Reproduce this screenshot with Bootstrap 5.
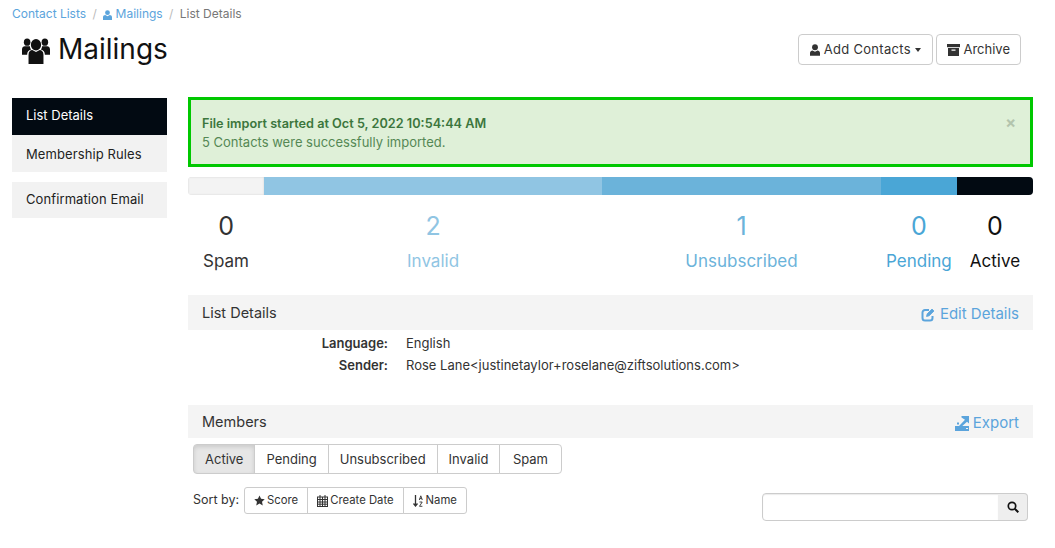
<!DOCTYPE html>
<html lang="en">
<head>
    <meta charset="UTF-8">
    <meta name="viewport" content="width=device-width, initial-scale=1.0">
    <title>Mailings</title>
    <link href="https://cdn.jsdelivr.net/npm/bootstrap@5.3.0/dist/css/bootstrap.min.css" rel="stylesheet">
    <style>
        body {
            font-family: Inter, "Liberation Sans", sans-serif;
            font-size: 13px;
            color: #333;
            background: #fff;
            overflow: hidden;
        }
        a { text-decoration: none; color: #5ba4dc; }
        .page-wrap { padding: 0 22px 0 12px; }
        .crumbs { font-size: 12px; height: 27px; margin: 0; padding-top: 5px; --bs-breadcrumb-item-padding-x: .4rem; }
        .crumbs .breadcrumb-item.active { color: #777; }
        .crumbs .breadcrumb-item + .breadcrumb-item::before { color: #bbb; }
        .head-row { height: 45px; padding: 0 12px 0 10px; margin-bottom: 26px; }
        .page-title { font-size: 28px; font-weight: 400; margin: 0; color: #111; display: flex; align-items: center; gap: 8px; }
        .head-btn { font-size: 13px; color: #333; border: 1px solid #ccc; background: #fff; padding: 5px 10px; line-height: 19px; border-radius: 4px; }
        .head-btn.wide-text { letter-spacing: .3px; padding: 5px 11px; }
        .head-gap { gap: 3px; }
        .side-col { width: 155px; flex: none; margin-right: 21px; }
        .side-link { display: block; background: #f2f2f2; color: #222; font-size: 13px; padding: 8px 14px; line-height: 18px; letter-spacing: .1px; }
        .side-link.on { background: #020a12; color: #fff; height: 37px; letter-spacing: 0; }
        .side-link.gap-top { margin-top: 10px; height: 36px; }
        .side-link.mid { height: 37px; padding-top: 10px; }
        .main-col { width: 845px; flex: none; margin-top: -1px; }
        .import-alert { background: #dff0d8; color: #3c763d; border: 3px solid #00c800; border-radius: 0; padding: 14px 11px 12px; height: 70px; margin-bottom: 10px; line-height: 18px; font-size: 13px; position: relative; }
        .import-alert strong { font-size: 12.7px; }
        .import-alert .note { opacity: .85; }
        .close-x { position: absolute; right: 14px; top: 13px; color: #b3c4ad; font-weight: 700; font-size: 16px; line-height: 18px; }
        .bar { height: 18px; border-radius: 4px; background: #f5f5f5; box-shadow: inset 0 1px 2px rgba(0,0,0,.1); }
        .seg-spam { background: #f3f3f3; box-shadow: inset 0 0 2px rgba(0,0,0,.15); }
        .seg-invalid { background: #90c5e3; }
        .seg-unsub { background: #6bb3da; }
        .seg-pending { background: #4aa6d6; }
        .seg-active { background: #020a12; }
        .stat-cell { text-align: center; white-space: nowrap; }
        .stat-num { font-size: 25px; line-height: 30px; margin-top: 16px; }
        .stat-name { font-size: 17px; line-height: 24px; margin-top: 8px; }
        .tone-dark { color: #333; }
        .tone-black { color: #111; }
        .tone-invalid { color: #90c5e3; }
        .tone-unsub { color: #6bb3da; }
        .tone-pending { color: #4aa6d6; }
        .band { background: #f4f4f4; height: 35px; padding: 0 14px; margin-top: 22px; font-size: 14.5px; }
        .band-link { font-size: 15px; display: flex; align-items: center; gap: 4px; padding-top: 3px; }
        .info-row { line-height: 22px; display: flex; }
        .info-key { width: 200px; text-align: right; font-weight: 600; margin-right: 18px; }
        .info-block { padding-top: 2px; height: 75px; }
        .tab-group { margin: 6px 0 0 5px; }
        .tab-btn { font-size: 13px; padding: 4px 11px; line-height: 19px; border: 1px solid #ccc; color: #333; background: #fff; border-radius: 4px; height: 30px; }
        .tab-btn:last-child { padding: 4px 12.500px; }
        .tab-btn.on { background: #e6e6e6; box-shadow: inset 0 2px 4px rgba(0,0,0,.12); }
        .sort-row { margin: 13px 0 0 5px; }
        .sort-btn { font-size: 11.3px; padding: 3px 9px; line-height: 19px; border: 1px solid #ccc; color: #333; background: #fff; display: inline-flex; align-items: center; gap: 2px; border-radius: 3px; }
        .sort-label { margin-right: 5px; font-size: 12.5px; }
        .search-box { width: 266px; margin: 55px 5px 0 0; height: 28px; }
        .search-box .form-control { height: 28px; font-size: 13px; border-color: #ccc; border-radius: 4px 0 0 4px; box-shadow: inset 0 1px 1px rgba(0,0,0,.08); }
        .search-btn { background: #eee; border: 1px solid #ccc; border-left: 0; width: 30px; padding: 0; display: flex; align-items: center; justify-content: center; border-radius: 0 4px 4px 0; }
        .caret-down { display: inline-block; border-top: 4px solid #333; border-left: 3.500px solid transparent; border-right: 3.500px solid transparent; vertical-align: middle; }
    </style>
</head>
<body>
<div class="page-wrap">
    <ol class="breadcrumb crumbs">
        <li class="breadcrumb-item"><a href="#">Contact Lists</a></li>
        <li class="breadcrumb-item"><a href="#">
            <svg width="9" height="10" viewBox="0 0 12 13" fill="#5ba4dc"><circle cx="6" cy="3.400" r="3.200"/><path d="M0 13V9.500C0 7.500 1.500 6.500 3 6.500L6 8L9 6.500C10.500 6.500 12 7.500 12 9.500V13Z"/></svg>
            Mailings</a></li>
        <li class="breadcrumb-item active">List Details</li>
    </ol>

    <div class="d-flex justify-content-between align-items-center head-row">
        <h1 class="page-title">
            <svg width="28" height="28" viewBox="0 0 30 27" preserveAspectRatio="none" fill="#111"><circle cx="15" cy="8.500" r="5.500"/><circle cx="5.500" cy="6" r="3.500"/><circle cx="24.500" cy="6" r="3.500"/><path d="M7 27V18C7 15 9 13.500 11 13.500L15 15.500L19 13.500C21 13.500 23 15 23 18V27Z"/><path d="M0 18V13C0 11 1.500 10 3 10H8.500C8.500 11.500 9 12.200 9.700 13C7 13.500 5.500 15.500 5.500 18Z"/><path d="M30 18V13C30 11 28.500 10 27 10H21.500C21.500 11.500 21 12.200 20.300 13C23 13.500 24.500 15.500 24.500 18Z"/></svg>
            Mailings
        </h1>
        <div class="d-flex head-gap">
            <button class="btn head-btn wide-text">
                <svg width="10" height="12" viewBox="0 0 12 14" fill="#333"><circle cx="6" cy="3.700" r="3.500"/><path d="M0 14V10.500C0 8.500 1.500 7.500 3 7.500L6 9L9 7.500C10.500 7.500 12 8.500 12 10.500V14Z"/></svg>
                Add Contacts <span class="caret-down"></span>
            </button>
            <button class="btn head-btn">
                <svg width="13" height="12" viewBox="0 0 13 12" fill="#333"><rect width="13" height="3.200"/><path d="M1 4H12V12H1ZM4.500 5.500V6.800H8.500V5.500Z" fill-rule="evenodd"/></svg>
                Archive
            </button>
        </div>
    </div>

    <div class="d-flex">
        <div class="side-col">
            <a class="side-link on" href="#">List Details</a>
            <a class="side-link mid" href="#">Membership Rules</a>
            <a class="side-link gap-top" href="#">Confirmation Email</a>
        </div>
        <div class="main-col">
            <div class="import-alert" role="alert">
                <strong class="fw-semibold">File import started at Oct 5, 2022 10:54:44 AM</strong><br>
                <span class="note">5 Contacts were successfully imported.</span>
                <span class="close-x">×</span>
            </div>

            <div class="d-flex bar overflow-hidden">
                <div class="seg-spam" style="width:9%"></div>
                <div class="seg-invalid" style="width:40%"></div>
                <div class="seg-unsub" style="width:33%"></div>
                <div class="seg-pending" style="width:9%"></div>
                <div class="seg-active" style="width:9%"></div>
            </div>
            <div class="d-flex">
                <div class="stat-cell tone-dark" style="width:9%"><div class="stat-num">0</div><div class="stat-name">Spam</div></div>
                <div class="stat-cell tone-invalid" style="width:40%"><div class="stat-num">2</div><div class="stat-name">Invalid</div></div>
                <div class="stat-cell tone-unsub" style="width:33%"><div class="stat-num">1</div><div class="stat-name">Unsubscribed</div></div>
                <div class="stat-cell tone-pending" style="width:9%"><div class="stat-num">0</div><div class="stat-name">Pending</div></div>
                <div class="stat-cell tone-black" style="width:9%"><div class="stat-num">0</div><div class="stat-name">Active</div></div>
            </div>

            <div class="band d-flex justify-content-between align-items-center">
                <span>List Details</span>
                <a class="band-link" href="#">
                    <svg width="15" height="15" viewBox="0 0 15 15" fill="none" stroke="#5ba4dc" stroke-width="2"><path d="M11.500 9V11A2.500 2.500 0 0 1 9 13.500H4A2.500 2.500 0 0 1 1.500 11V5.500A2.500 2.500 0 0 1 4 3H8"/><path d="M5.500 9.500L6.200 6.800L11 2L13 4L8.200 8.800Z" fill="#5ba4dc" stroke-width=".8"/></svg>
                    Edit Details
                </a>
            </div>
            <div class="info-block">
                <div class="info-row"><span class="info-key">Language:</span><span>English</span></div>
                <div class="info-row"><span class="info-key">Sender:</span><span>Rose Lane&lt;justinetaylor+roselane@ziftsolutions.com&gt;</span></div>
            </div>

            <div class="band d-flex justify-content-between align-items-center mt-0" style="height:33px">
                <span>Members</span>
                <a class="band-link" href="#">
                    <svg width="14" height="15" viewBox="0 0 14 15" fill="#5ba4dc"><path d="M0 10H14V15H0ZM11 12V13H13V12Z" fill-rule="evenodd"/><path d="M6.500 0H14V7.500L12 5.800L7 10.200L3.800 10.200L10 3.800L6.500 1.500Z"/><rect x="2" y="6.500" width="2" height="2"/></svg>
                    Export
                </a>
            </div>

            <div class="d-flex justify-content-between">
                <div>
                    <div class="btn-group tab-group d-inline-flex">
                        <button class="btn tab-btn on">Active</button>
                        <button class="btn tab-btn">Pending</button>
                        <button class="btn tab-btn">Unsubscribed</button>
                        <button class="btn tab-btn">Invalid</button>
                        <button class="btn tab-btn">Spam</button>
                    </div>
                    <div class="d-flex align-items-center sort-row">
                        <span class="sort-label">Sort by:</span>
                        <div class="btn-group">
                            <button class="btn sort-btn">
                                <svg width="11" height="11" viewBox="0 0 24 24" fill="#333"><path d="M12 1L15.400 8.300L23.400 9.300L17.500 14.800L19.100 22.700L12 18.800L4.900 22.700L6.500 14.800L.6 9.300L8.600 8.300Z"/></svg>
                                Score
                            </button>
                            <button class="btn sort-btn">
                                <svg width="11" height="12" viewBox="0 0 11 12" fill="none" stroke="#333" stroke-width="1"><rect x=".5" y="2" width="10" height="9.500"/><path d="M.5 4.500H10.500M.5 7H10.500M.5 9.200H10.500M3 2V11.500M5.500 2V11.500M8 2V11.500M3 0V2M8 0V2"/></svg>
                                Create Date
                            </button>
                            <button class="btn sort-btn">
                                <svg width="11" height="12" viewBox="0 0 11 12" fill="none" stroke="#333" stroke-width="1.300"><path d="M2.500 0V11M.5 8.500L2.500 11L4.500 8.500"/><path d="M6.300 5L7.800 .8L9.300 5M6.800 3.600H8.800M6.500 7H9.200L6.500 11.300H9.400" stroke-width=".9"/></svg>
                                Name
                            </button>
                        </div>
                    </div>
                </div>
                <div class="input-group search-box">
                    <input class="form-control" type="text" aria-label="Search">
                    <button class="btn search-btn" aria-label="Search">
                        <svg width="12" height="12" viewBox="0 0 12 12" fill="none" stroke="#111" stroke-width="1.700"><circle cx="5" cy="5" r="3.700"/><path d="M7.800 7.800L11.300 11.300" stroke-width="2"/></svg>
                    </button>
                </div>
            </div>
        </div>
    </div>
</div>
<script src="https://cdn.jsdelivr.net/npm/bootstrap@5.3.0/dist/js/bootstrap.bundle.min.js"></script>
</body>
</html>
